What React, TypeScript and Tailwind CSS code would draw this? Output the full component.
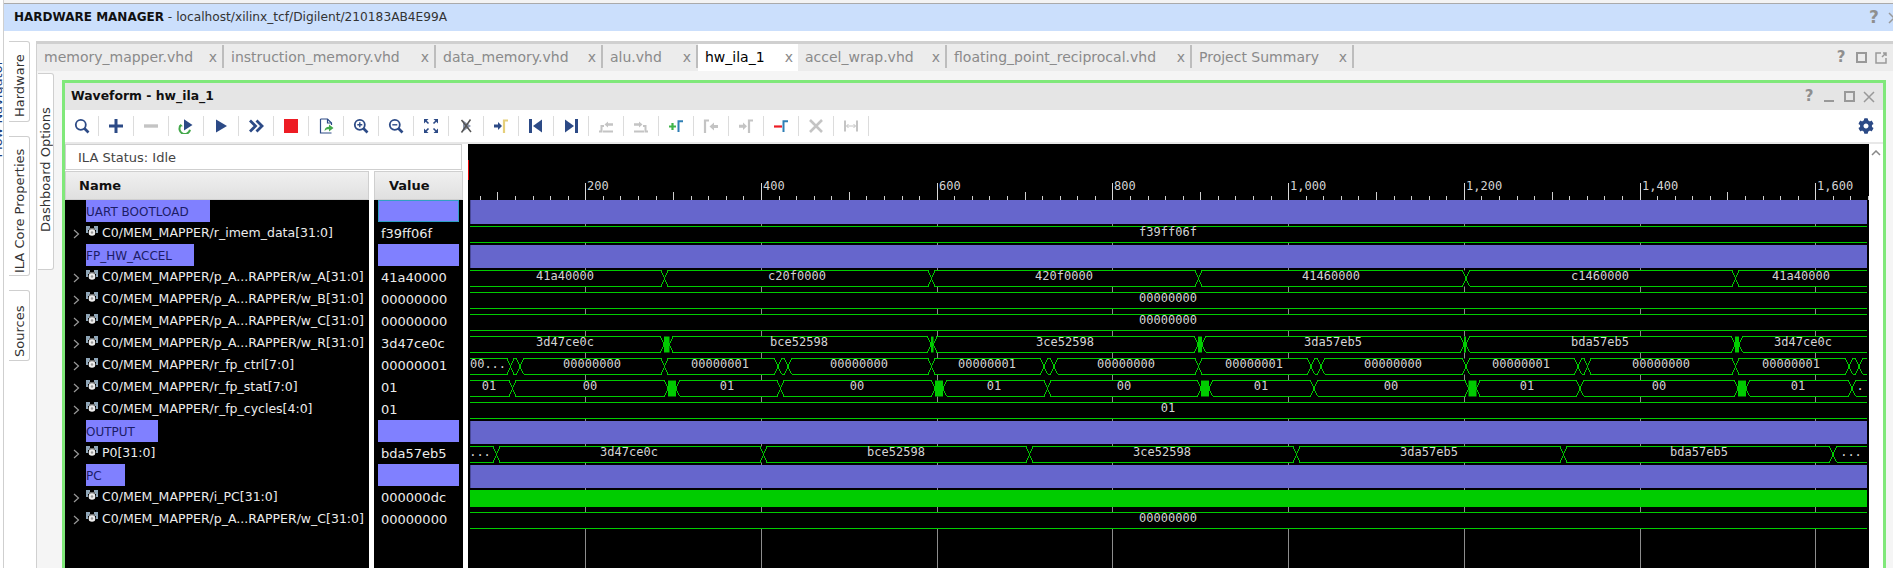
import type { ReactNode } from "react";
import { FaCog } from "react-icons/fa";

const NAVY = "#2c4a86";
const GREY = "#c4c4c4";

/* ─── signal list ─── */
type Row =
  | { kind: "group"; label: string; width: string; selected?: boolean }
  | { kind: "signal"; label: string; value: string };

const ROWS: Row[] = [
  { kind: "group", label: "UART BOOTLOAD", width: "w-[124px]", selected: true },
  { kind: "signal", label: "C0/MEM_MAPPER/r_imem_data[31:0]", value: "f39ff06f" },
  { kind: "group", label: "FP_HW_ACCEL", width: "w-[108px]" },
  { kind: "signal", label: "C0/MEM_MAPPER/p_A...RAPPER/w_A[31:0]", value: "41a40000" },
  { kind: "signal", label: "C0/MEM_MAPPER/p_A...RAPPER/w_B[31:0]", value: "00000000" },
  { kind: "signal", label: "C0/MEM_MAPPER/p_A...RAPPER/w_C[31:0]", value: "00000000" },
  { kind: "signal", label: "C0/MEM_MAPPER/p_A...RAPPER/w_R[31:0]", value: "3d47ce0c" },
  { kind: "signal", label: "C0/MEM_MAPPER/r_fp_ctrl[7:0]", value: "00000001" },
  { kind: "signal", label: "C0/MEM_MAPPER/r_fp_stat[7:0]", value: "01" },
  { kind: "signal", label: "C0/MEM_MAPPER/r_fp_cycles[4:0]", value: "01" },
  { kind: "group", label: "OUTPUT", width: "w-[72px]" },
  { kind: "signal", label: "P0[31:0]", value: "bda57eb5" },
  { kind: "group", label: "PC", width: "w-[39px]" },
  { kind: "signal", label: "C0/MEM_MAPPER/i_PC[31:0]", value: "000000dc" },
  { kind: "signal", label: "C0/MEM_MAPPER/p_A...RAPPER/w_C[31:0]", value: "00000000" },
];

const TABS = [
  { name: "memory_mapper.vhd", width: "w-[187px]" },
  { name: "instruction_memory.vhd", width: "w-[212px]" },
  { name: "data_memory.vhd", width: "w-[167px]" },
  { name: "alu.vhd", width: "w-[95px]" },
  { name: "hw_ila_1", width: "w-[100px]", active: true },
  { name: "accel_wrap.vhd", width: "w-[149px]" },
  { name: "floating_point_reciprocal.vhd", width: "w-[245px]" },
  { name: "Project Summary", width: "w-[162px]" },
];

/* ─── toolbar icons ─── */
function Svg({ children }: { children: ReactNode }) {
  return (
    <svg width="16" height="16" viewBox="0 0 16 16" fill="none">
      {children}
    </svg>
  );
}

const Bracket = ({ color }: { color: string }) => <path d="M10.5 14V3.2H15" stroke={color} strokeWidth="2" />;
const GreyStep = ({ flip }: { flip?: boolean }) => (
  <g transform={flip ? "translate(16 0) scale(-1 1)" : undefined}>
    <path d="M1 13.5h2.5V8H6M15 13.5H5" stroke={GREY} strokeWidth="2" />
    <path d="M10 3.5 6.5 6.5 10 9.5zM10 5.3h5v2.4h-5z" fill={GREY} />
  </g>
);

const ICONS: ReactNode[] = [
  <Svg><circle cx="6.8" cy="6.8" r="5" stroke={NAVY} strokeWidth="1.8" /><path d="m10.5 10.5 4 4" stroke={NAVY} strokeWidth="2.6" /></Svg>,
  <Svg><path d="M8 1v14M1 8h14" stroke={NAVY} strokeWidth="3" /></Svg>,
  <Svg><path d="M1 8h14" stroke={GREY} strokeWidth="3.4" /></Svg>,
  <Svg><path d="M2.6 7.5a5.3 5.3 0 1 0 9.4 4.2" stroke="#43a84a" strokeWidth="2" /><path d="m.6 8.5 2-2.6 2.3 2.4z" fill="#43a84a" /><path d="M6 1.2 14.5 7 6 12.6z" fill={NAVY} /></Svg>,
  <Svg><path d="M3 1.5 14 8 3 14.5z" fill={NAVY} /></Svg>,
  <Svg><path d="m2 2.5 5.5 5.5L2 13.5M8.5 2.5 14 8l-5.5 5.5" stroke={NAVY} strokeWidth="2.8" /></Svg>,
  <Svg><rect x="1" y="1" width="14" height="14" fill="#ed1c24" /></Svg>,
  <Svg><path d="M2.5 1h7l4 4v2M2.5 1v14h11" stroke={NAVY} strokeWidth="1.2" /><path d="M9.5 1v4h4" stroke={NAVY} strokeWidth="1.2" /><path d="M6.5 13c.3-3 2-4.300 4.500-4.300V6.500l4.500 3.500-4.500 3.500v-2.300c-1.800 0-3.200.4-4.500 1.800z" fill="#43a84a" /></Svg>,
  <Svg><circle cx="6.800" cy="6.800" r="5" stroke={NAVY} strokeWidth="1.800" /><path d="m10.500 10.500 4 4" stroke={NAVY} strokeWidth="2.600" /><path d="M6.800 4.300v5M4.300 6.800h5" stroke={NAVY} strokeWidth="1.400" /></Svg>,
  <Svg><circle cx="6.800" cy="6.800" r="5" stroke={NAVY} strokeWidth="1.800" /><path d="m10.500 10.500 4 4" stroke={NAVY} strokeWidth="2.600" /><path d="M4.300 6.800h5" stroke={NAVY} strokeWidth="1.400" /></Svg>,
  <Svg><path d="M1 1h4.500L1 5.500zM15 1h-4.500L15 5.500zM1 15h4.500L1 10.500zM15 15h-4.500l4.500-4.500z" fill={NAVY} /><path d="m3 3 2.500 2.500M13 3l-2.500 2.500M3 13l2.500-2.500M13 13l-2.500-2.500" stroke={NAVY} strokeWidth="1.600" /></Svg>,
  <Svg><path d="M5 2.500 13 8l-8 5.500z" fill="#8d97ad" /><path d="M12.500 1.500 3.500 14.500M3.500 2l9.500 12" stroke="#555" strokeWidth="1.500" /></Svg>,
  <Svg><path d="M1 6.500h4V4l4 4-4 4V9.500H1z" fill={NAVY} /><path d="M11 15V2.500h4" stroke="#e6cf7a" strokeWidth="2.200" /></Svg>,
  <Svg><path d="M2.500 1v14" stroke={NAVY} strokeWidth="3" /><path d="M14 1.500v13L5 8z" fill={NAVY} /></Svg>,
  <Svg><path d="M13.500 1v14" stroke={NAVY} strokeWidth="3" /><path d="M2 1.500v13L11 8z" fill={NAVY} /></Svg>,
  <Svg><GreyStep /></Svg>,
  <Svg><GreyStep flip /></Svg>,
  <Svg><path d="M4.500 5v7M1 8.500h7" stroke="#3fb54a" strokeWidth="2.200" /><Bracket color="#2f7fb5" /></Svg>,
  <Svg><path d="M2 15V2.500h4" stroke={GREY} strokeWidth="2.200" /><path d="M15 7h-4V4.500L6.500 8.500l4.500 4V10h4z" fill={GREY} /></Svg>,
  <Svg><path d="M1 6.800h4V4.500l4 3.800-4 3.800V9.800H1z" fill={GREY} /><path d="M11 15V2.500h4" stroke={GREY} strokeWidth="2.200" /></Svg>,
  <Svg><path d="M1 8.500h8" stroke="#ed1c24" strokeWidth="2.200" /><Bracket color="#2f7fb5" /></Svg>,
  <Svg><path d="m2 2 12 12M14 2 2 14" stroke={GREY} strokeWidth="2.600" /></Svg>,
  <Svg><path d="M2 2.500v11M14 2.500v11" stroke={GREY} strokeWidth="2" /><path d="M3.500 8h9M5.500 6l-2 2 2 2M10.500 6l2 2-2 2" stroke={GREY} strokeWidth="1" /></Svg>,
];

/* ─── small pieces ─── */
function SideTab({ label, className }: { label: string; className: string }) {
  return (
    <div className={`flex justify-center rounded-r-[3px] border border-l-0 border-[#cfcfcf] bg-white ${className}`}>
      <span className="rotate-180 text-[13px] leading-none text-[#333] [writing-mode:vertical-rl]">{label}</span>
    </div>
  );
}

function Help({ className = "text-[15px]" }: { className?: string }) {
  return <span className={`font-bold leading-none text-[#8f8f8f] ${className}`}>?</span>;
}

function WinButton({ children }: { children: ReactNode }) {
  return <div className="flex w-5 items-center justify-center">{children}</div>;
}

const SquareBtn = () => <div className="h-[11px] w-[11px] border-2 border-[#999]" />;
const CloseBtn = () => (
  <svg width="12" height="12" viewBox="0 0 12 12"><path d="m1 1 10 10M11 1 1 11" stroke="#999" strokeWidth="1.500" /></svg>
);

function SignalIcon() {
  return (
    <svg width="12" height="12" viewBox="0 0 12 12" className="-mt-1 shrink-0">
      <path d="M0 0h4v4H2v3H0zM12 0H8v4h2v3h2z" fill="#8fa6b8" />
      <path d="M3 2h6v7H3z" fill="#6d6d6d" />
      <circle cx="6" cy="6.500" r="3.300" fill="#ededed" />
      <circle cx="6" cy="6.500" r="1.200" fill="#9a9a9a" />
    </svg>
  );
}

function RowLabel({ row }: { row: Row }) {
  if (row.kind === "group") {
    return (
      <div className="h-[22px] pl-[21px]">
        <div className={`flex h-full items-center bg-[#8080ff] pt-px text-[12px] text-[#1c1c66] ${row.width}`}>{row.label}</div>
      </div>
    );
  }
  return (
    <div className="flex h-[22px] items-center pl-[8px] pt-px text-[12.5px] text-[#ececec]">
      <svg width="13" height="12" viewBox="0 0 13 12" className="shrink-0">
        <path d="m1 2 4.500 4L1 10" fill="none" stroke="#999" strokeWidth="1.200" />
      </svg>
      <SignalIcon />
      <span className="ml-1 whitespace-nowrap">{row.label}</span>
    </div>
  );
}

function RowValue({ row }: { row: Row }) {
  if (row.kind === "group") {
    return (
      <div className="h-[22px] pl-1">
        <div className={`h-full w-[81px] bg-[#8080ff] ${row.selected ? "border border-[#2f9fc4]" : ""}`} />
      </div>
    );
  }
  return <div className="flex h-[22px] items-center pl-[7px] pt-px text-[#ececec]">{row.value}</div>;
}

/* ─── waveform drawing, everything in page pixels through the viewBox ─── */
const WAVE_L = 470;
const WAVE_R = 1867;
const HW = 3.5;
const rowY = (i: number) => 200 + i * 22;

type Cross = [number, number?];
type Label = [string, number];

const MAJOR = Array.from({ length: 8 }, (_, i) => ({ x: 585.3 + i * 175.72, t: 200 * (i + 1) }));

function Ruler() {
  const ticks: ReactNode[] = [];
  for (let n = -6; n <= 73; n++) {
    const x = Math.round(585.3 + n * 17.572);
    if (x < WAVE_L || n % 10 === 0) continue;
    const top = n % 5 === 0 ? 192 : 196;
    ticks.push(<path key={n} d={`M${x + 0.5} ${top}V200`} stroke="#cfcfcf" />);
  }
  return (
    <g shapeRendering="crispEdges">
      <rect x="468" y="160" width="1" height="20" fill="#e00000" />
      {ticks}
      <path d={`M${WAVE_L} 200.500H${WAVE_R}`} stroke="#cfcfcf" />
      {MAJOR.map((m) => (
        <g key={m.t}>
          <path d={`M${Math.round(m.x) + 0.5} 183V200`} stroke="#d8d8d8" />
          <path d={`M${Math.round(m.x) + 0.5} 200V568`} stroke="#8c8c8c" />
          <text x={Math.round(m.x) + 2} y="190" className="fill-[#d4d4d4] text-[12px]">
            {m.t.toLocaleString("en-US")}
          </text>
        </g>
      ))}
    </g>
  );
}

function GroupBar({ row }: { row: number }) {
  const y = row === 0 ? 200 : rowY(row) + 1;
  const h = row === 0 ? 24 : 23;
  return (
    <>
      <rect x={WAVE_L} y={y} width={WAVE_R - WAVE_L} height={h} fill="#6666cc" />
      <rect x={WAVE_L} y={y} width="1" height={h} fill="#4a4a99" />
    </>
  );
}

function Bus({ row, crosses = [], labels = [] }: { row: number; crosses?: Cross[]; labels?: Label[] }) {
  const top = rowY(row) + 4.5;
  const bot = rowY(row) + 20.5;
  const mid = (top + bot) / 2;
  let d = "";
  let from = WAVE_L;
  const blocks: ReactNode[] = [];
  crosses.forEach(([a, b], i) => {
    d += `M${from} ${top}H${a - HW}M${from} ${bot}H${a - HW}`;
    if (b === undefined) {
      d += `M${a - HW} ${top}L${a + HW} ${bot}M${a - HW} ${bot}L${a + HW} ${top}`;
      from = a + HW;
    } else {
      d += `M${a - HW} ${top}L${a} ${mid}M${a - HW} ${bot}L${a} ${mid}M${b + HW} ${top}L${b} ${mid}M${b + HW} ${bot}L${b} ${mid}`;
      blocks.push(<rect key={i} x={a} y={top} width={b - a} height={bot - top} fill="#00cc00" />);
      from = b + HW;
    }
  });
  d += `M${from} ${top}H${WAVE_R}M${from} ${bot}H${WAVE_R}`;
  return (
    <>
      <rect x={WAVE_L} y={top} width={WAVE_R - WAVE_L} height={bot - top} fill="#000" />
      <path d={d} fill="none" stroke="#00cc00" shapeRendering="crispEdges" />
      {blocks}
      {labels.map(([text, x]) => (
        <text key={`${text}${x}`} x={x} y={rowY(row) + 14} textAnchor="middle" className="fill-[#d4d4d4] text-[12px]">
          {text}
        </text>
      ))}
    </>
  );
}

const CENTER = 1168;

function Waveform() {
  return (
    <svg
      width="1401"
      height="424"
      viewBox="468 144 1401 424"
      className="block shrink-0 bg-black font-['DejaVu_Sans_Mono',monospace]"
    >
      <Ruler />
      <GroupBar row={0} />
      <Bus row={1} labels={[["f39ff06f", CENTER]]} />
      <GroupBar row={2} />
      <Bus
        row={3}
        crosses={[[664.5], [931.5], [1198.5], [1466], [1735.5]]}
        labels={[["41a40000", 565], ["c20f0000", 797], ["420f0000", 1064], ["41460000", 1331], ["c1460000", 1600], ["41a40000", 1801]]}
      />
      <Bus row={4} labels={[["00000000", CENTER]]} />
      <Bus row={5} labels={[["00000000", CENTER]]} />
      <Bus
        row={6}
        crosses={[[664, 669.5], [931, 933.5], [1198, 1202], [1464, 1466], [1735, 1739]]}
        labels={[["3d47ce0c", 565], ["bce52598", 799], ["3ce52598", 1065], ["3da57eb5", 1333], ["bda57eb5", 1600], ["3d47ce0c", 1803]]}
      />
      <Bus
        row={7}
        crosses={[[510.5], [520], [664.5], [778], [788], [931.5], [1044], [1054], [1198.5], [1311], [1321], [1466], [1578], [1587.5], [1735.5], [1849], [1859]]}
        labels={[["00...", 488], ["00000000", 592], ["00000001", 720], ["00000000", 859], ["00000001", 987], ["00000000", 1126], ["00000001", 1254], ["00000000", 1393], ["00000001", 1521], ["00000000", 1661], ["00000001", 1791]]}
      />
      <Bus
        row={8}
        crosses={[[512.5], [668, 676], [780.5], [935, 943], [1047.5], [1201, 1209], [1314], [1468.5, 1476.5], [1580], [1738, 1746], [1852]]}
        labels={[["01", 489], ["00", 590], ["01", 727], ["00", 857], ["01", 994], ["00", 1124], ["01", 1261], ["00", 1391], ["01", 1527], ["00", 1659], ["01", 1798], [".", 1860]]}
      />
      <Bus row={9} labels={[["01", CENTER]]} />
      <GroupBar row={10} />
      <Bus
        row={11}
        crosses={[[496.5], [763.5], [1029.5], [1296.5], [1563.5], [1833]]}
        labels={[["...", 480], ["3d47ce0c", 629], ["bce52598", 896], ["3ce52598", 1162], ["3da57eb5", 1429], ["bda57eb5", 1699], ["...", 1851]]}
      />
      <GroupBar row={12} />
      <rect x={WAVE_L} y={rowY(13) + 4} width={WAVE_R - WAVE_L} height="17" fill="#00cc00" />
      <Bus row={14} labels={[["00000000", CENTER]]} />
    </svg>
  );
}

/* ─── page ─── */
export default function App() {
  return (
    <div className="flex h-[568px] w-[1893px] overflow-hidden bg-white font-['DejaVu_Sans',sans-serif] text-[13px] text-[#222]">
      {/* bord gauche, tout ce qui reste du Flow Navigator */}
      <div className="w-1 shrink-0 overflow-hidden border-r border-[#cfcfcf] pt-[60px]">
        <span className="-ml-[9px] block rotate-180 whitespace-nowrap text-[13px] leading-none text-[#1d3f7c] [writing-mode:vertical-rl]">
          Flow Navigator
        </span>
      </div>

      <div className="flex min-w-0 flex-1 flex-col">
        <div className="h-[3px] shrink-0 border-b border-[#aaa] bg-[#f3f3f3] box-content" />
        <div className="flex h-[27px] shrink-0 items-center justify-between bg-[#cbdffc] pl-[10px]">
          <div className="whitespace-nowrap text-[12.2px]">
            <span className="text-[12px] font-bold text-[#111]">HARDWARE MANAGER</span>
            <span className="text-[#333]"> - localhost/xilinx_tcf/Digilent/210183AB4E99A</span>
          </div>
          <div className="-mr-[7px] flex w-[31px] items-center justify-between">
            <Help className="text-[17px]" />
            <CloseBtn />
          </div>
        </div>

        <div className="flex min-h-0 flex-1 pt-[10px]">
          <div className="flex w-[32px] shrink-0 flex-col gap-[14px] pl-[5px]">
            <SideTab label="Hardware" className="h-[81px] w-[21px] pb-[4px]" />
            <SideTab label="ILA Core Properties" className="h-[140px] w-[21px] pb-[2px]" />
            <SideTab label="Sources" className="h-[71px] w-[21px] pb-[3px]" />
          </div>

          <div className="flex min-w-0 flex-1 flex-col border-t-[3px] border-l border-[#d0d0d0] bg-[#f5f5f5]">
            <div className="flex h-[27px] shrink-0 items-start bg-[#ececec] text-[14px]">
              {TABS.map((t) => (
                <div
                  key={t.name}
                  className={`flex h-full items-center justify-between pl-[7px] ${t.width} ${
                    t.active ? "bg-white text-black" : "text-[#8a8a8a]"
                  }`}
                >
                  <span className="whitespace-nowrap">{t.name}</span>
                  <div className="flex h-full items-center">
                    <span className="mr-[5px] text-[#8a8a8a]">x</span>
                    {t.active ? null : <div className="mb-[3px] h-[23px] w-[2px] self-end bg-[#bdbdbd]" />}
                  </div>
                </div>
              ))}
              <div className="ml-auto flex h-full items-center pr-[2px]">
                <WinButton><Help /></WinButton>
                <WinButton><SquareBtn /></WinButton>
                <WinButton>
                  <svg width="12" height="12" viewBox="0 0 12 12" fill="none" stroke="#999" strokeWidth="1.500">
                    <path d="M6 1H1v10h10V6M7 5l4-4M8 1h3v3" />
                  </svg>
                </WinButton>
              </div>
            </div>

            <div className="flex min-h-0 flex-1">
              <div className="w-[25px] shrink-0 pl-px pt-[2px]">
                <SideTab label="Dashboard Options" className="h-[197px] w-[16px] pb-[37px]" />
              </div>

              <div className="mt-[9px] min-w-0 flex-1 mr-[7px] flex flex-col border-[3px] border-b-0 border-[#80e87a] bg-white">
                <div className="flex h-[27px] shrink-0 items-center justify-between bg-[#e5e5e5] pl-[6px] pr-1">
                  <span className="pb-px text-[12.4px] font-bold text-[#111]">Waveform - hw_ila_1</span>
                  <div className="flex items-center">
                    <WinButton><Help /></WinButton>
                    <WinButton><div className="mt-2 h-[2px] w-[10px] bg-[#999]" /></WinButton>
                    <WinButton><SquareBtn /></WinButton>
                    <WinButton><CloseBtn /></WinButton>
                  </div>
                </div>

                <div className="flex h-[32px] shrink-0 items-center border-b-2 border-[#e8e8e8] box-content">
                  {ICONS.map((icon, i) => (
                    <div key={i} className="flex items-center">
                      <div className={`flex justify-center ${i === 0 ? "w-[33px]" : "w-[34px]"}`}>{icon}</div>
                      <div className="h-5 w-px bg-[#dcdcdc]" />
                    </div>
                  ))}
                  <FaCog className="ml-auto mr-[9px] text-[16px] text-[#2c4a86]" />
                </div>

                <div className="flex min-h-0 flex-1">
                  <div className="flex w-[398px] shrink-0 flex-col">
                    <div className="flex h-[26px] w-[397px] shrink-0 items-center border border-[#cfcfcf] pl-3 pt-px text-[#444]">
                      ILA Status: Idle
                    </div>
                    <div className="mt-px flex min-h-0 flex-1 gap-[5px]">
                      <div className="w-[304px] bg-black">
                        <div className="flex h-[29px] items-center border border-[#cfcfcf] bg-gradient-to-b from-[#f0f0f0] to-[#e0e0e0] pl-[13px] font-bold text-[#111]">
                          Name
                        </div>
                        {ROWS.map((r, i) => (
                          <RowLabel key={i} row={r} />
                        ))}
                      </div>
                      <div className="w-[89px] bg-black">
                        <div className="flex h-[29px] items-center border border-[#cfcfcf] bg-gradient-to-b from-[#f0f0f0] to-[#e0e0e0] pl-[14px] font-bold text-[#111]">
                          Value
                        </div>
                        {ROWS.map((r, i) => (
                          <RowValue key={i} row={r} />
                        ))}
                      </div>
                    </div>
                  </div>
                  <div className="ml-[5px] shrink-0">
                    <Waveform />
                  </div>
                  <div className="flex flex-1 justify-center pt-[6px]">
                    <svg width="10" height="6" viewBox="0 0 10 6">
                      <path d="m1 5 4-4 4 4" fill="none" stroke="#888" strokeWidth="1.500" />
                    </svg>
                  </div>
                </div>
              </div>
            </div>
          </div>
        </div>
      </div>
    </div>
  );
}
